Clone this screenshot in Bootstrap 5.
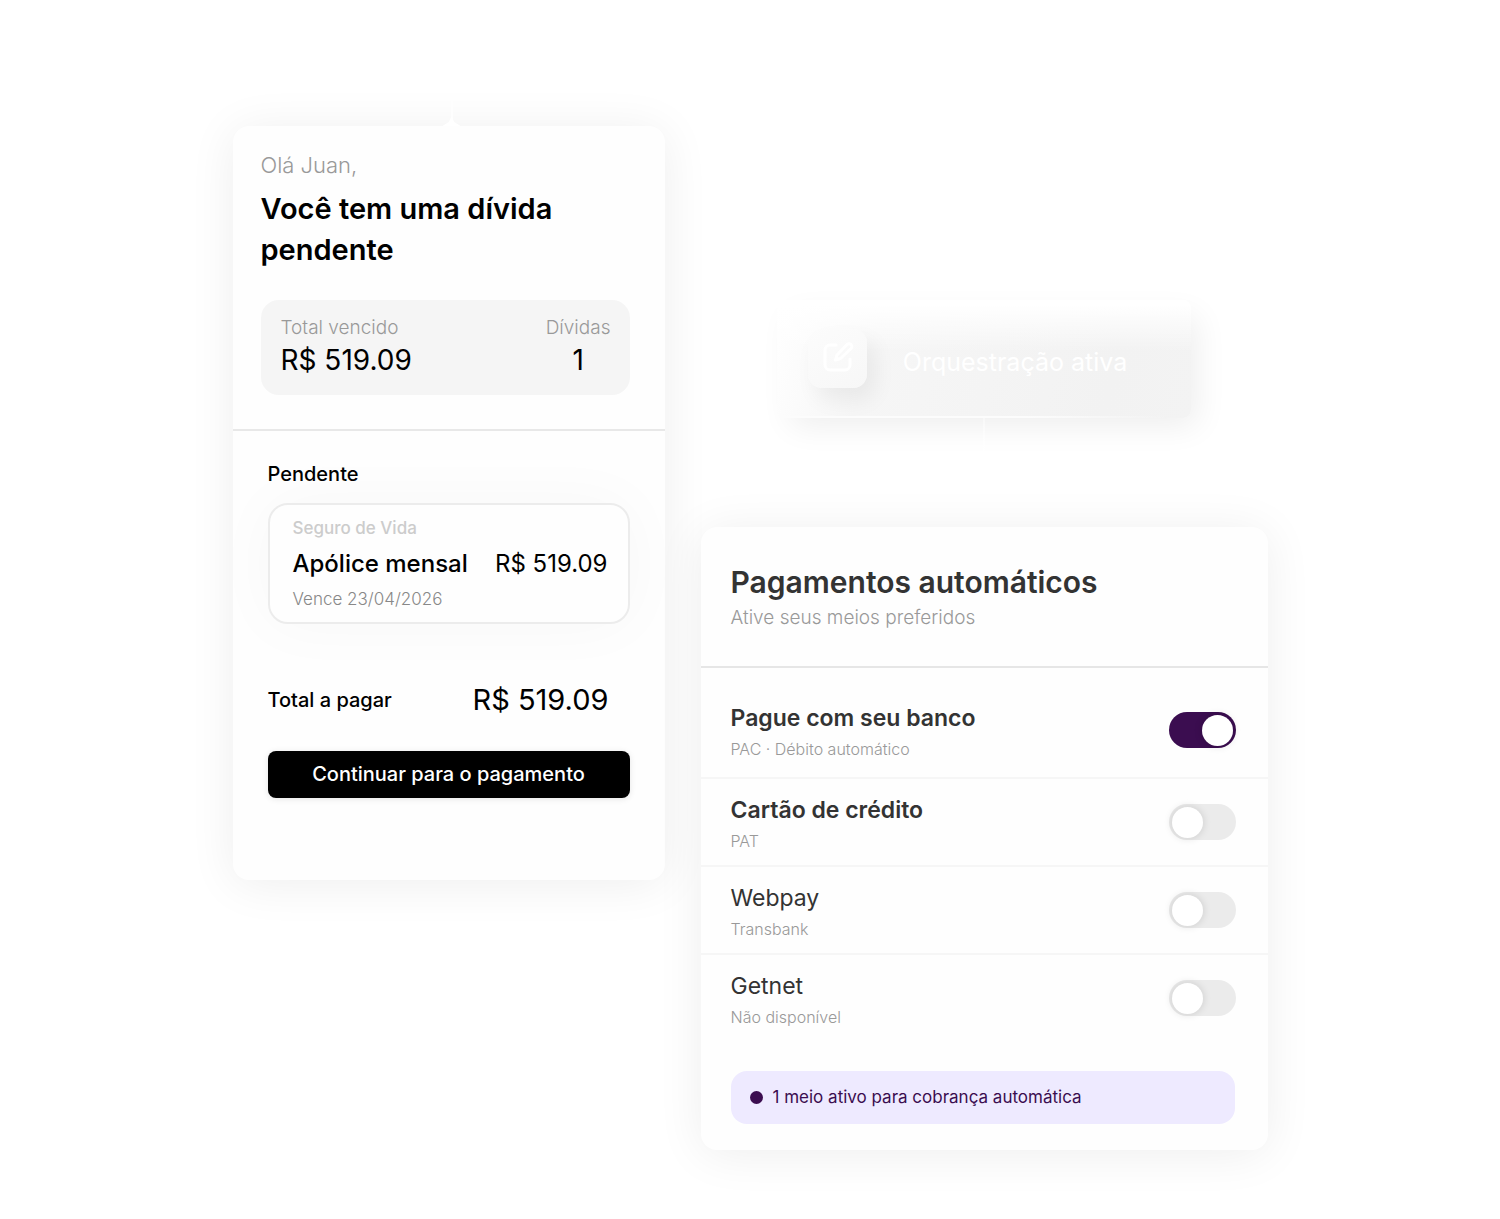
<!DOCTYPE html>
<html lang="pt-BR">
<head>
<meta charset="utf-8">
<meta name="viewport" content="width=device-width, initial-scale=1">
<title>Pagamentos automáticos</title>
<link rel="stylesheet" href="https://cdn.jsdelivr.net/npm/bootstrap@5.3.0/dist/css/bootstrap.min.css">
<script src="https://cdn.jsdelivr.net/npm/bootstrap@5.3.0/dist/js/bootstrap.bundle.min.js"></script>
<style>
body { font-family: Inter, "Liberation Sans", sans-serif; background: #fff; color: #000; }
.stage { display: grid; grid-template-columns: 432fr 567fr; column-gap: 36px; max-width: 1035px; padding: 126px 0 68px; align-items: start; }
.panel { --bs-card-border-width: 0; --bs-card-border-radius: 16px; --bs-card-bg: #fefefe; color: #000; box-shadow: 0 4px 48px rgba(0,0,0,.07); }
.soft { color: #999; font-weight: 300; }
.connector { width: 2px; background: linear-gradient(rgba(255,255,255,.4), #fff); position: relative; align-self: center; }
.connector::after { content: ""; position: absolute; left: -8px; bottom: 0; width: 18px; height: 10px; background: #fff; clip-path: polygon(50% 0, 65% 60%, 100% 100%, 0 100%, 35% 60%); }
.panel > .connector { position: absolute; top: -27px; left: calc(50% + 2px); height: 27px; }

.debt-head { padding: 22px 35px 34px 28px; border-bottom: 2px solid #e8e8e8; }
.hello { font-size: 22px; line-height: 34px; margin-bottom: 6px; }
.debt-title { font-size: 29px; line-height: 41px; font-weight: 600; margin-bottom: 30px; }
.summary { background: #f5f5f5; border-radius: 18px; padding: 14px 19px 17px 20px; }
.caption-text { font-size: 19px; line-height: 28px; }
.amount { font-size: 28px; line-height: 36px; }
.debt-body { padding: 28px 35px 82px; }
.label-text { font-size: 20px; line-height: 30px; font-weight: 500; }
.policy { border: 2px solid #ececec; border-radius: 20px; padding: 10px 20px 10px 23px; margin: 14px 0 58px; background: #fefefe; box-shadow: 0 0 64px rgba(0,0,0,.03); }
.policy-kind { font-size: 17px; line-height: 26px; font-weight: 500; color: #ccc; }
.policy-name { font-size: 24px; line-height: 46px; font-weight: 500; }
.policy-value { font-size: 24px; line-height: 46px; }
.policy-due { font-size: 17px; line-height: 25px; color: #888; font-weight: 300; }
.total-row { padding-right: 21px; margin-bottom: 33px; }
.total-row .amount { font-size: 29px; }
.pay-btn { --bs-btn-bg: #000; --bs-btn-color: #fff; --bs-btn-border-width: 0; --bs-btn-border-radius: 8px; --bs-btn-font-size: 20px; --bs-btn-font-weight: 500; --bs-btn-hover-bg: #222; --bs-btn-hover-color: #fff; line-height: 31px; padding: 8px 0; box-shadow: 0 1px 6px rgba(0,0,0,.1); }

.auto-col { padding-top: 174px; }
.orchestration { align-self: center; width: 73%; padding: 29px 28px 30px 31px; color: #fff; font-size: 25px; border-radius: 8px; background: linear-gradient(90deg, #fcfcfc 60%, rgba(252,252,252,0) 95%) bottom / 100% 2px no-repeat, linear-gradient(180deg, #fff 4%, rgba(255,255,255,0) 44%), linear-gradient(105deg, #fff, #f6f6f6 24%, #f2f2f2 80%, #f3f3f3); box-shadow: 10px 12px 32px -4px rgba(0,0,0,.07); }
.edit-tile { width: 59px; height: 59px; border-radius: 14px; background: linear-gradient(150deg, #fcfcfc, #f7f7f7); box-shadow: 8px 12px 22px rgba(0,0,0,.06); padding: 11px 13px; }
.orchestration-text { padding-top: 9px; }
.orchestration + .connector { height: 109px; }
.auto-head { padding: 35px 30px 34px; border-bottom: 2px solid #e6e6e6; color: #333; }
.auto-title { font-size: 30px; line-height: 40px; font-weight: 600; margin: 0; }
.auto-lead { font-size: 19px; line-height: 28px; padding-top: 2px; }
.method { padding: 14px 32px 10px 30px; border-bottom: 2px solid #f6f6f6; }
.method:first-child { padding: 33px 32px 14px 30px; }
.method:last-child { border-bottom: 0; }
.method-name { font-size: 23px; line-height: 34px; color: #333; display: block; }
.method-note { font-size: 16px; line-height: 28px; }
.toggle { appearance: none; flex: none; width: 67px; height: 36px; margin: 0 0 4px; border-radius: 18px; background: #ebebeb; cursor: pointer; }
.toggle::before { content: ""; display: block; width: 31px; height: 31px; margin: 3px; border-radius: 50%; background: #fff; box-shadow: 0 0 8px rgba(0,0,0,.14); }
.toggle:checked { background: #3b0d50; }
.toggle:checked::before { margin-left: 33px; }
.notice { margin: 30px 33px 26px 30px; padding: 12px 19px; gap: 10px; border-radius: 16px; background: #eeeaff; color: #3b0d50; font-size: 17px; line-height: 29px; }
.dot { width: 13px; height: 13px; border-radius: 50%; background: #3b0d50; flex: none; }
@media (max-width: 1000px) { .stage { grid-template-columns: 1fr; padding: 40px 16px; row-gap: 40px; } .auto-col { padding-top: 0; } }
</style>
</head>
<body>
<main class="stage mx-auto">
  <section class="card panel">
    <span class="connector"></span>
    <header class="debt-head">
      <p class="hello soft">Olá Juan,</p>
      <h1 class="debt-title">Você tem uma dívida pendente</h1>
      <div class="summary d-flex justify-content-between">
        <div><div class="caption-text soft">Total vencido</div><div class="amount">R$ 519.09</div></div>
        <div class="text-center"><div class="caption-text soft">Dívidas</div><div class="amount">1</div></div>
      </div>
    </header>
    <div class="debt-body">
      <h2 class="label-text m-0">Pendente</h2>
      <article class="policy">
        <div class="policy-kind">Seguro de Vida</div>
        <div class="d-flex justify-content-between text-nowrap">
          <span class="policy-name">Apólice mensal</span><span class="policy-value">R$ 519.09</span>
        </div>
        <div class="policy-due">Vence 23/04/2026</div>
      </article>
      <div class="total-row d-flex justify-content-between align-items-center">
        <span class="label-text">Total a pagar</span><span class="amount">R$ 519.09</span>
      </div>
      <button type="button" class="btn pay-btn w-100">Continuar para o pagamento</button>
    </div>
  </section>

  <div class="auto-col d-flex flex-column">
    <div class="orchestration d-flex align-items-center">
      <span class="edit-tile flex-shrink-0">
        <svg class="d-block" width="34" height="34" viewBox="0 0 34 34" fill="none" stroke="#fff" stroke-width="3" stroke-linecap="round" stroke-linejoin="round" aria-hidden="true">
          <path d="M15 5H9a5 5 0 0 0-5 5v15a5 5 0 0 0 5 5h15a5 5 0 0 0 5-5v-6"/>
          <path d="M26 4.500a2.800 2.800 0 0 1 4 4L19.500 18.500l-5 1.500 1.500-5z"/>
        </svg>
      </span>
      <span class="orchestration-text ms-auto me-auto">Orquestração ativa</span>
    </div>
    <span class="connector"></span>
    <section class="card panel">
      <header class="auto-head">
        <h2 class="auto-title">Pagamentos automáticos</h2>
        <div class="auto-lead soft">Ative seus meios preferidos</div>
      </header>
      <div>
        <div class="method d-flex justify-content-between align-items-center">
          <div><label class="method-name fw-semibold" for="banco">Pague com seu banco</label><div class="method-note soft">PAC · Débito automático</div></div>
          <input class="toggle" type="checkbox" role="switch" id="banco" checked>
        </div>
        <div class="method d-flex justify-content-between align-items-center">
          <div><label class="method-name fw-semibold" for="cartao">Cartão de crédito</label><div class="method-note soft">PAT</div></div>
          <input class="toggle" type="checkbox" role="switch" id="cartao">
        </div>
        <div class="method d-flex justify-content-between align-items-center">
          <div><label class="method-name" for="webpay">Webpay</label><div class="method-note soft">Transbank</div></div>
          <input class="toggle" type="checkbox" role="switch" id="webpay">
        </div>
        <div class="method d-flex justify-content-between align-items-center">
          <div><label class="method-name" for="getnet">Getnet</label><div class="method-note soft">Não disponível</div></div>
          <input class="toggle" type="checkbox" role="switch" id="getnet">
        </div>
      </div>
      <div class="notice d-flex align-items-center"><span class="dot"></span><span>1 meio ativo para cobrança automática</span></div>
    </section>
  </div>
</main>
</body>
</html>
